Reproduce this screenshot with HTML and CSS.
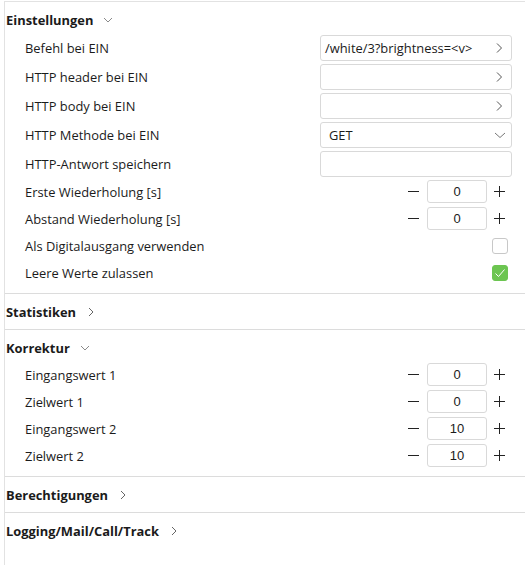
FILE: index.html
```html
<!DOCTYPE html>
<html>
<head>
<meta charset="utf-8">
<link rel="stylesheet" href="styles.css">
</head>
<body>
<div class="panel">
  <section class="section open">
    <div class="head">Einstellungen <svg class="chev" width="10" height="10" viewBox="0 0 10 10"><path d="M1 3 L5 7 L9 3" fill="none" stroke="#8a8a8a" stroke-width="1"/></svg></div>
    <div class="row tall"><span class="label">Befehl bei EIN</span><div class="field"><span class="val">/white/3?brightness=&lt;v&gt;</span><svg class="ic" width="8" height="12" viewBox="0 0 8 12"><path d="M2 1.5 L6.5 6 L2 10.5" fill="none" stroke="#555" stroke-width="1"/></svg></div></div>
    <div class="row tall"><span class="label">HTTP header bei EIN</span><div class="field"><span class="val"></span><svg class="ic" width="8" height="12" viewBox="0 0 8 12"><path d="M2 1.5 L6.5 6 L2 10.5" fill="none" stroke="#555" stroke-width="1"/></svg></div></div>
    <div class="row tall"><span class="label">HTTP body bei EIN</span><div class="field"><span class="val"></span><svg class="ic" width="8" height="12" viewBox="0 0 8 12"><path d="M2 1.5 L6.5 6 L2 10.5" fill="none" stroke="#555" stroke-width="1"/></svg></div></div>
    <div class="row tall"><span class="label">HTTP Methode bei EIN</span><div class="field"><span class="val get">GET</span><svg class="ic dd" width="12" height="8" viewBox="0 0 12 8"><path d="M1 2 L6 6.5 L11 2" fill="none" stroke="#777" stroke-width="1"/></svg></div></div>
    <div class="row tall"><span class="label">HTTP-Antwort speichern</span><div class="field"></div></div>
    <div class="row step"><span class="label">Erste Wiederholung [s]</span><div class="stepper"><span class="pm minus"></span><div class="num">0</div><span class="pm plus"></span></div></div>
    <div class="row step"><span class="label">Abstand Wiederholung [s]</span><div class="stepper"><span class="pm minus"></span><div class="num">0</div><span class="pm plus"></span></div></div>
    <div class="row"><span class="label">Als Digitalausgang verwenden</span><span class="check"></span></div>
    <div class="row"><span class="label">Leere Werte zulassen</span><span class="check on"><svg width="16" height="16" viewBox="0 0 16 16"><path d="M3.5 8.5 L6.5 11.5 L12.5 4.5" fill="none" stroke="#fff" stroke-width="1"/></svg></span></div>
  </section>
  <section class="section">
    <div class="head">Statistiken <svg class="chev" width="10" height="10" viewBox="0 0 10 10"><path d="M3 1 L7 5 L3 9" fill="none" stroke="#666" stroke-width="1"/></svg></div>
  </section>
  <section class="section open">
    <div class="head">Korrektur <svg class="chev" width="10" height="10" viewBox="0 0 10 10"><path d="M1 3 L5 7 L9 3" fill="none" stroke="#8a8a8a" stroke-width="1"/></svg></div>
    <div class="row step"><span class="label">Eingangswert 1</span><div class="stepper"><span class="pm minus"></span><div class="num">0</div><span class="pm plus"></span></div></div>
    <div class="row step"><span class="label">Zielwert 1</span><div class="stepper"><span class="pm minus"></span><div class="num">0</div><span class="pm plus"></span></div></div>
    <div class="row step"><span class="label">Eingangswert 2</span><div class="stepper"><span class="pm minus"></span><div class="num">10</div><span class="pm plus"></span></div></div>
    <div class="row step"><span class="label">Zielwert 2</span><div class="stepper"><span class="pm minus"></span><div class="num">10</div><span class="pm plus"></span></div></div>
  </section>
  <section class="section">
    <div class="head">Berechtigungen <svg class="chev" width="10" height="10" viewBox="0 0 10 10"><path d="M3 1 L7 5 L3 9" fill="none" stroke="#666" stroke-width="1"/></svg></div>
  </section>
  <section class="section last">
    <div class="head">Logging/Mail/Call/Track <svg class="chev" width="10" height="10" viewBox="0 0 10 10"><path d="M3 1 L7 5 L3 9" fill="none" stroke="#666" stroke-width="1"/></svg></div>
  </section>
</div>
</body>
</html>
```
FILE: styles.css
```css
html, body {
  margin: 0;
  padding: 0;
  background: #fff;
}
body {
  font-family: "Open Sans", "Noto Sans", sans-serif;
  font-size: 12.9px;
  color: #1b1b1b;
  height: 566px;
  overflow: hidden;
}
.panel {
  margin-top: 1px;
  margin-left: 4px;
  border-top: 1px solid #e2e2e2;
  border-left: 1px solid #e2e2e2;
  height: 564px;
  box-sizing: border-box;
}
.section {
  border-bottom: 1px solid #dcdcdc;
}
.section.last {
  border-bottom: none;
}
.section.open {
  padding-bottom: 7px;
}
.head {
  display: flex;
  align-items: center;
  gap: 10px;
  font-weight: 700;
  font-size: 12.9px;
  line-height: 18px;
  padding: 9px 0 8px 1px;
}
.section.open .head {
  padding-bottom: 4px;
}
.chev {
  display: block;
}
.row {
  display: flex;
  align-items: center;
  justify-content: space-between;
  height: 27px;
  padding-left: 20px;
  padding-right: 17px;
}
.row.tall {
  height: 29px;
  padding-right: 13px;
}
.row.step {
  padding-right: 20px;
}
.label {
  line-height: 18px;
}
.field {
  width: 192px;
  height: 26px;
  box-sizing: border-box;
  border: 1px solid #d9d9d9;
  border-radius: 3px;
  display: flex;
  align-items: center;
  justify-content: space-between;
  padding: 0 8px 0 4px;
}
.val {
  line-height: 18px;
}
.val.get {
  padding-left: 4px;
}
.ic.dd {
  margin-right: -3px;
}
.stepper {
  display: flex;
  align-items: center;
}
.num {
  width: 60px;
  height: 23px;
  box-sizing: border-box;
  border: 1px solid #d9d9d9;
  border-radius: 3px;
  text-align: center;
  line-height: 21px;
  font-family: "Liberation Sans", sans-serif;
  font-size: 13px;
  margin: 0 7px 0 8px;
}
.pm {
  position: relative;
  width: 11px;
  height: 11px;
  display: block;
}
.pm::before, .plus::after {
  content: "";
  position: absolute;
  background: #222;
}
.pm::before {
  left: 0;
  right: 0;
  top: 5px;
  height: 1px;
}
.plus::after {
  top: 0;
  bottom: 0;
  left: 5px;
  width: 1px;
}
.check {
  width: 16px;
  height: 16px;
  box-sizing: border-box;
  border: 1px solid #c8c8c8;
  border-radius: 3px;
  display: block;
}
.check.on {
  background: #6cc551;
  border-color: #6cc551;
}
.check svg {
  display: block;
  margin: -1px;
}
```
